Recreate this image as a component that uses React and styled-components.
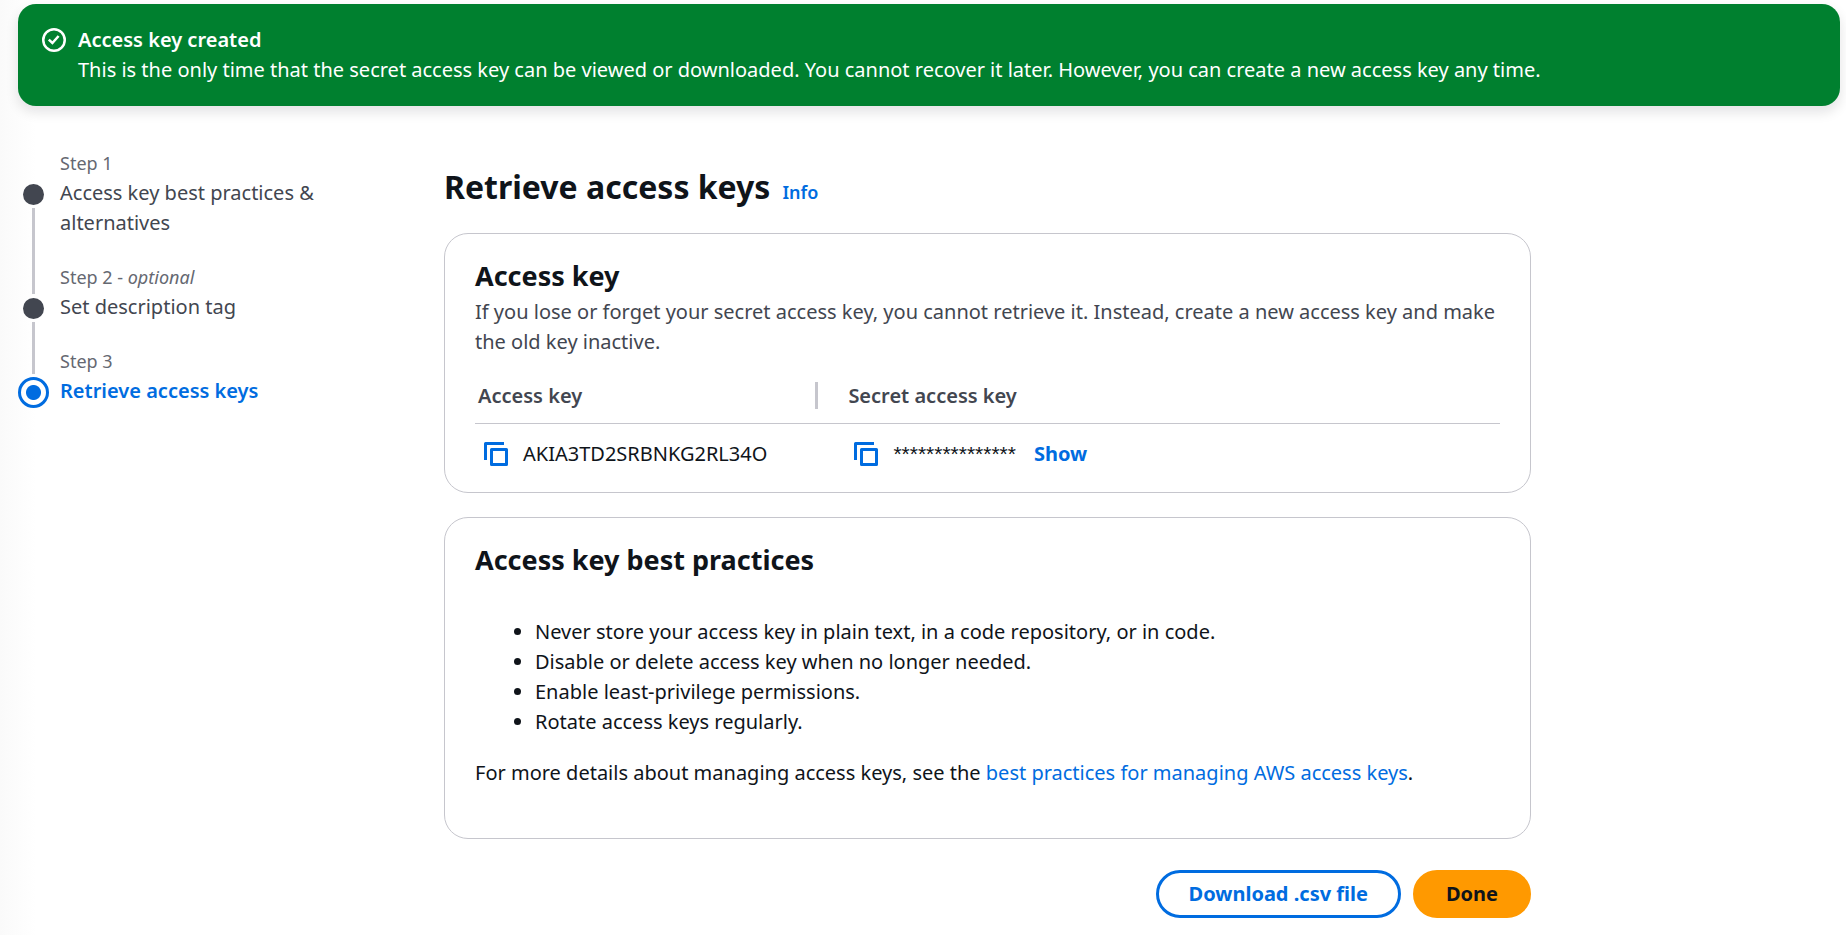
import React from 'react';
import styled, { createGlobalStyle, css } from 'styled-components';

const color = {
  text: '#0f141a',
  body: '#424650',
  muted: '#656871',
  blue: '#006ce0',
  line: '#c6c6cd',
  green: '#00802f',
  orange: '#ff9900',
};

const GlobalStyle = createGlobalStyle`
  *, *::before, *::after { box-sizing: border-box; }
  body {
    margin: 0;
    background: linear-gradient(to right, #fafafa, #ffffff 36px);
    color: ${color.text};
    font-family: "Noto Sans", "Open Sans", sans-serif;
    font-size: 20px;
    line-height: 30px;
  }
  h1, h2, p, ul, ol { margin: 0; }
  button { font: inherit; cursor: pointer; }
  a { color: ${color.blue}; text-decoration: none; }
`;

const Page = styled.div`
  padding: 4px 6px 16px 18px;
`;

const Flash = styled.div`
  display: flex;
  gap: 12px;
  padding: 21px 24px;
  border-radius: 18px;
  background: ${color.green};
  color: #ffffff;
  box-shadow: 0 6px 12px 1px rgba(0, 7, 22, 0.1);
`;

const FlashIcon = styled.svg`
  flex: none;
  width: 24px;
  height: 24px;
  margin-top: 3px;
`;

const FlashTitle = styled.div`
  font-weight: 600;
`;

const Layout = styled.div`
  display: grid;
  grid-template-columns: 300px minmax(0, 1087px);
  column-gap: 126px;
  padding-top: 45px;
`;

const Steps = styled.ol`
  padding: 0;
  list-style: none;
`;

const Step = styled.li`
  display: flex;
  gap: 12px;
`;

const Rail = styled.div`
  display: flex;
  flex: none;
  flex-direction: column;
  align-items: center;
  width: 31px;
  margin-right: -1px;
`;

const RailTop = styled.span`
  width: 3px;
  height: ${p => (p.$active ? 25 : 29)}px;
  background: ${p => (p.$hidden ? 'transparent' : color.line)};
`;

const RailBottom = styled.span`
  flex: 1;
  width: 3px;
  background: ${color.line};
`;

const Dot = styled.span`
  flex: none;
  width: 21px;
  height: 21px;
  margin: 4px 0 3px;
  border-radius: 50%;
  background: ${color.body};
  ${p => p.$active && css`
    width: 31px;
    height: 31px;
    margin: 3px 0 0;
    border: 3px solid ${color.blue};
    background: radial-gradient(circle, ${color.blue} 7px, transparent 8px);
  `}
`;

const StepText = styled.div`
  padding-bottom: 27px;
`;

const StepLabel = styled.div`
  color: ${color.muted};
  font-size: 18px;
  line-height: 24px;
`;

const StepTitle = styled.div`
  padding-top: 3px;
  color: ${p => (p.$active ? color.blue : color.body)};
  font-weight: ${p => (p.$active ? 600 : 400)};
`;

const Main = styled.main`
  display: flex;
  flex-direction: column;
  gap: 24px;
  padding-top: 13px;
`;

const PageHeader = styled.header`
  display: flex;
  align-items: baseline;
  gap: 12px;
`;

const PageTitle = styled.h1`
  font-size: 32px;
  font-weight: 700;
  line-height: 45px;
`;

const InfoLink = styled.a`
  font-size: 18px;
  font-weight: 600;
  line-height: 24px;
`;

const Card = styled.section`
  padding: 24px 30px ${p => p.$bottom}px;
  border: 1px solid ${color.line};
  border-radius: 24px;
  background: #ffffff;
`;

const CardTitle = styled.h2`
  font-size: 27px;
  font-weight: 700;
  line-height: 36px;
`;

const CardText = styled.p`
  padding-top: 3px;
  color: ${color.body};
`;

const KeyTable = styled.table`
  width: 100%;
  margin-top: 12px;
  border-collapse: collapse;
  table-layout: fixed;
`;

const HeadCell = styled.th`
  width: ${p => p.$width};
  height: 54px;
  padding: 0 0 0 ${p => (p.$first ? 3 : 30)}px;
  border-bottom: 1px solid ${color.line};
  color: ${color.body};
  font-weight: 600;
  text-align: left;
`;

const HeadInner = styled.div`
  border-right: ${p => (p.$divider ? `3px solid ${color.line}` : '0')};
  line-height: 27px;
`;

const Cell = styled.td`
  height: 62px;
  padding: 0 0 0 ${p => (p.$first ? 3 : 30)}px;
`;

const CellRow = styled.div`
  display: flex;
  align-items: center;
  gap: 9px;
`;

const MaskedKey = styled.span`
  font-family: "Liberation Sans", sans-serif;
  font-size: 21px;
`;

const PlainButton = styled.button`
  padding: 0;
  border: 0;
  background: none;
  color: ${color.blue};
`;

const IconButton = styled(PlainButton)`
  display: flex;
  padding: 6px;
`;

const ShowButton = styled(PlainButton)`
  padding: 0 9px;
  font-weight: 700;
`;

const Practices = styled.ul`
  padding: 39px 0 21px 60px;
`;

const Actions = styled.div`
  display: flex;
  justify-content: flex-end;
  gap: 12px;
  padding-top: 7px;
`;

const Button = styled.button`
  height: 48px;
  padding: 0 30px;
  border: 3px solid ${p => (p.$primary ? color.orange : color.blue)};
  border-radius: 24px;
  background: ${p => (p.$primary ? color.orange : '#ffffff')};
  color: ${p => (p.$primary ? color.text : color.blue)};
  font-weight: 700;
`;

const CopyIcon = () => (
  <svg width="24" height="24" viewBox="0 0 24 24" fill="none" stroke="currentColor" strokeWidth="3" strokeLinejoin="round" aria-hidden="true">
    <path d="M1.5 18V1.5H20" />
    <path d="M7.5 7.5H22.5V22.5H7.5Z" />
  </svg>
);

const steps = [
  { label: 'Step 1', title: 'Access key best practices & alternatives' },
  { label: 'Step 2', optional: true, title: 'Set description tag' },
  { label: 'Step 3', title: 'Retrieve access keys', active: true },
];

const practices = [
  'Never store your access key in plain text, in a code repository, or in code.',
  'Disable or delete access key when no longer needed.',
  'Enable least-privilege permissions.',
  'Rotate access keys regularly.',
];

export default function App() {
  return (
    <Page>
      <GlobalStyle />
      <Flash role="status">
        <FlashIcon viewBox="0 0 24 24" fill="none" stroke="currentColor" aria-hidden="true">
          <circle cx="12" cy="12" r="10.75" strokeWidth="2.5" />
          <path d="M6.8 11.6L10.4 15L16.6 8" strokeWidth="2.5" />
        </FlashIcon>
        <div>
          <FlashTitle>Access key created</FlashTitle>
          <div>
            This is the only time that the secret access key can be viewed or downloaded. You cannot
            recover it later. However, you can create a new access key any time.
          </div>
        </div>
      </Flash>

      <Layout>
        <nav aria-label="Steps">
          <Steps>
            {steps.map((step, i) => (
              <Step key={step.label} aria-current={step.active ? 'step' : undefined}>
                <Rail>
                  <RailTop $hidden={i === 0} $active={step.active} />
                  <Dot $active={step.active} />
                  {i < steps.length - 1 && <RailBottom />}
                </Rail>
                <StepText>
                  <StepLabel>
                    {step.label}
                    {step.optional && <> - <em>optional</em></>}
                  </StepLabel>
                  <StepTitle $active={step.active}>{step.title}</StepTitle>
                </StepText>
              </Step>
            ))}
          </Steps>
        </nav>

        <Main>
          <PageHeader>
            <PageTitle>Retrieve access keys</PageTitle>
            <InfoLink href="#info">Info</InfoLink>
          </PageHeader>

          <Card $bottom={7}>
            <CardTitle>Access key</CardTitle>
            <CardText>
              If you lose or forget your secret access key, you cannot retrieve it. Instead, create a
              new access key and make the old key inactive.
            </CardText>
            <KeyTable>
              <thead>
                <tr>
                  <HeadCell scope="col" $first $width="33.5%">
                    <HeadInner $divider>Access key</HeadInner>
                  </HeadCell>
                  <HeadCell scope="col">
                    <HeadInner>Secret access key</HeadInner>
                  </HeadCell>
                </tr>
              </thead>
              <tbody>
                <tr>
                  <Cell $first>
                    <CellRow>
                      <IconButton type="button" aria-label="Copy access key"><CopyIcon /></IconButton>
                      <span>AKIA3TD2SRBNKG2RL34O</span>
                    </CellRow>
                  </Cell>
                  <Cell>
                    <CellRow>
                      <IconButton type="button" aria-label="Copy secret access key"><CopyIcon /></IconButton>
                      <MaskedKey>***************</MaskedKey>
                      <ShowButton type="button">Show</ShowButton>
                    </CellRow>
                  </Cell>
                </tr>
              </tbody>
            </KeyTable>
          </Card>

          <Card $bottom={50}>
            <CardTitle>Access key best practices</CardTitle>
            <Practices>
              {practices.map(text => <li key={text}>{text}</li>)}
            </Practices>
            <p>
              For more details about managing access keys, see the{' '}
              <a href="#best-practices">best practices for managing AWS access keys</a>.
            </p>
          </Card>

          <Actions>
            <Button type="button">Download .csv file</Button>
            <Button type="button" $primary>Done</Button>
          </Actions>
        </Main>
      </Layout>
    </Page>
  );
}
